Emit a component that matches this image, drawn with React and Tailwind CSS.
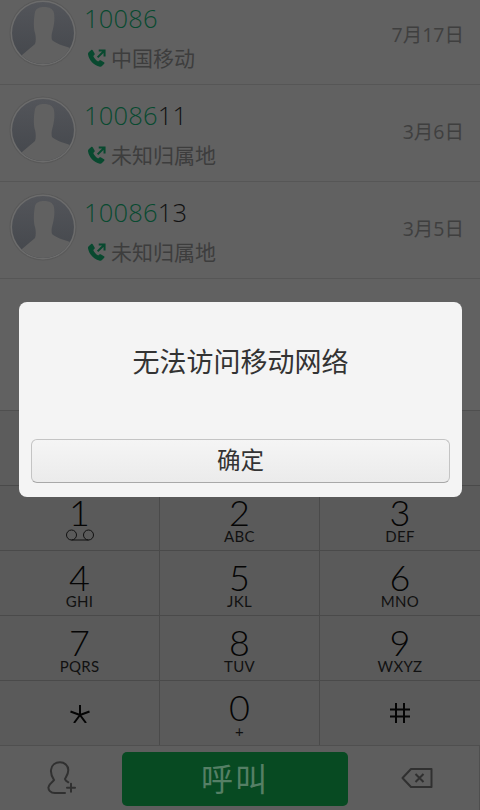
import React from 'react';

const CJK = { fontFamily: '"Open Sans", "Noto Sans CJK SC", sans-serif' };

const calls = [
  { match: '10086', rest: '', place: '中国移动', date: '7月17日' },
  { match: '10086', rest: '11', place: '未知归属地', date: '3月6日' },
  { match: '10086', rest: '13', place: '未知归属地', date: '3月5日' },
];

const keys = [
  ['1', null], ['2', 'ABC'], ['3', 'DEF'],
  ['4', 'GHI'], ['5', 'JKL'], ['6', 'MNO'],
  ['7', 'PQRS'], ['8', 'TUV'], ['9', 'WXYZ'],
  ['*', ''], ['0', '+'], ['#', ''],
];

const Avatar = ({ id }) => (
  <svg width="68" height="68" viewBox="0 0 68 68" className="shrink-0">
    <defs>
      <linearGradient id={`av${id}`} x1="0" y1="0" x2="0" y2="1">
        <stop offset="0" stopColor="#53555a" />
        <stop offset="1" stopColor="#44474c" />
      </linearGradient>
      <clipPath id={`avc${id}`}><circle cx="34" cy="34" r="31" /></clipPath>
    </defs>
    <circle cx="34" cy="34" r="33.500" fill="#595959" />
    <circle cx="34" cy="34" r="32.500" fill="#6c6c6c" />
    <circle cx="34" cy="34" r="31" fill={`url(#av${id})`} />
    <g clipPath={`url(#avc${id})`}>
      <path
        fill="#616161"
        d="M26 13C27 9 31 8 35 8c6 0 9 2 10 6 1 6 0 12-1 16-1 4-2 7-1 11 3 3 9 5 21 9v18H4v-8l9-4 13-11c1-3 1-7 0-11-2-6-1-16 0-21z"
      />
    </g>
  </svg>
);

const CallIcon = () => (
  <svg width="19" height="19" viewBox="0 0 17 17" className="shrink-0">
    <path
      fill="#08492f"
      d="M1.500 2.800 3.800.9c.5-.4 1-.3 1.300.2l1.700 3c.2.4.2.8-.1 1.100L5.600 6.300c.6 1.900 2.400 3.900 4.400 4.900l1.100-1c.3-.3.700-.3 1.100-.1l3 1.800c.5.300.6.800.2 1.300l-2 2.100c-.5.500-1.200.7-1.900.5C6 14.600 1.800 10 .9 4.700.8 3.900 1 3.300 1.500 2.800z"
    />
    <path fill="none" stroke="#08492f" strokeWidth="1.800" d="M9.500 7.500 15 2M10.500 1.400h5.200v5.200" />
  </svg>
);

const CallRow = ({ id, match, rest, place, date }) => (
  <div className="flex h-[97px] items-start border-b border-[#565656] pl-[9px] pr-[16px]">
    <div className="mt-[11px]"><Avatar id={id} /></div>
    <div className="ml-[7px] flex-1">
      <div className="mt-[12px] h-[36px] text-[25.500px] font-light leading-[36px] tracking-[0.2px]" style={CJK}>
        <span className="text-[#084a30]">{match}</span>
        <span className="text-[#111111]">{rest}</span>
      </div>
      <div className="mt-[7px] flex items-center gap-[5px] pl-[3px] text-[21px] leading-[30px] text-[#3d3d3d]" style={CJK}>
        <CallIcon />
        <span>{place}</span>
      </div>
    </div>
    <div className="mt-[32px] text-[19.500px] leading-[30px] text-[#3f3f3f]" style={CJK}>{date}</div>
  </div>
);

const Voicemail = () => (
  <svg width="30" height="14" viewBox="0 0 30 14" className="mt-[1px]">
    <g fill="none" stroke="#111111" strokeWidth="1">
      <circle cx="6.500" cy="7" r="5" />
      <circle cx="23.500" cy="7" r="5" />
      <path d="M6.500 12h17" />
    </g>
  </svg>
);

const Key = ({ digit, sub, first, last }) => {
  if (digit === '*') {
    return (
      <div className="flex h-[65px] flex-col items-center border-t border-r border-[#4a4a4a]">
        <svg width="20" height="18" viewBox="0 0 20 18" className="mt-[24px]">
          <path fill="none" stroke="#050505" strokeWidth="2" d="M10 0v10M10 10 .5 6.500M10 10l9.500-3.500M10 10 4 18M10 10l6 8" />
        </svg>
      </div>
    );
  }
  if (digit === '#') {
    return (
      <div className="flex h-[65px] flex-col items-center border-t border-[#4a4a4a]">
        <svg width="20" height="20" viewBox="0 0 20 20" className="mt-[22px]">
          <path fill="none" stroke="#050505" strokeWidth="2" d="M6 0v20M14 0v20M0 6.500h20M0 13.500h20" />
        </svg>
      </div>
    );
  }
  return (
    <div className={`flex h-[65px] flex-col items-center border-t border-[#4a4a4a] ${last ? '' : 'border-r'}`}>
      <div className="mt-[11px] h-[30px] text-[36px] font-light leading-[30px] text-[#050505]" style={{ fontFamily: 'Lato, sans-serif' }}>
        {digit}
      </div>
      {first ? (
        <Voicemail />
      ) : (
        <div className="mt-[2px] h-[14px] text-[15px] leading-[14px] tracking-[0.3px] text-[#111111]" style={{ fontFamily: 'Lato, sans-serif' }}>
          {sub}
        </div>
      )}
    </div>
  );
};

const App = () => {
  return (
    <div className="relative h-[810px] w-[480px] overflow-hidden bg-[#616161]" style={CJK}>
      {/* 通话记录 */}
      <div className="-mt-[12px] h-[422px]">
        {calls.map((c, i) => (
          <CallRow key={i} id={i} {...c} />
        ))}
      </div>

      {/* 号码输入区 */}
      <div className="h-[75px] border-t border-[#4f4f4f] bg-[#5c5c5c]" />

      {/* 拨号盘 */}
      <div className="grid grid-cols-[160px_160px_160px] bg-[#5a5a5a]">
        {keys.map(([digit, sub], i) => (
          <Key key={digit} digit={digit} sub={sub} first={i === 0} last={i % 3 === 2} />
        ))}
      </div>

      {/* 底部操作栏 */}
      <div className="flex h-[65px] items-start border-t border-[#4f4f4f] bg-[#5e5e5e]">
        <div className="flex h-[64px] w-[122px] items-center justify-center">
          <svg width="32" height="34" viewBox="0 0 32 34" className="ml-[2px]">
            <g fill="none" stroke="#303030" strokeWidth="2" strokeLinecap="round">
              <path d="M19 32H9c-4.500 0-7-3-6.500-6 .5-3.500 4.500-5 5.500-7-2-3-3.300-7-3-10C5.500 4 9.500 1.300 14 1.300S22.300 4.500 22.300 9c0 4-1.800 6-3.300 9 .5 2 2 2.500 3.300 3.300" />
              <path d="M25 22.700v8M21 26.700h8" />
            </g>
          </svg>
        </div>
        <button className="mt-[6px] flex h-[54px] w-[226px] items-center justify-center rounded-[5px] bg-[#074a22] text-[32px] tracking-[2px] text-[#557f65]" style={CJK}>
          呼叫
        </button>
        <div className="flex h-[64px] flex-1 items-center justify-center border-r border-[#4f4f4f]">
          <svg width="32" height="22" viewBox="0 0 32 22" className="ml-[6px]">
            <g fill="none" stroke="#303030" strokeWidth="2">
              <path d="M10 2h20.500v18H10L1.500 11z" strokeLinejoin="round" />
              <path d="M14.500 7l8 8M22.500 7l-8 8" />
            </g>
          </svg>
        </div>
      </div>

      {/* 弹窗 */}
      <div className="absolute left-[19px] top-[302px] flex h-[195px] w-[443px] flex-col rounded-[8px] bg-[#f4f4f4] px-[12px] pb-[14px]">
        <div className="flex flex-1 items-start justify-center pt-[41px] text-[27px] leading-[38px] text-[#333333]" style={CJK}>
          无法访问移动网络
        </div>
        <button className="h-[44px] w-full rounded-[6px] border border-[#c4c4c4] border-b-[#a8a8a8] bg-gradient-to-b from-[#f5f5f5] to-[#ebebeb] text-[23.500px] text-[#333333]" style={CJK}>
          确定
        </button>
      </div>
    </div>
  );
};

export default App;
